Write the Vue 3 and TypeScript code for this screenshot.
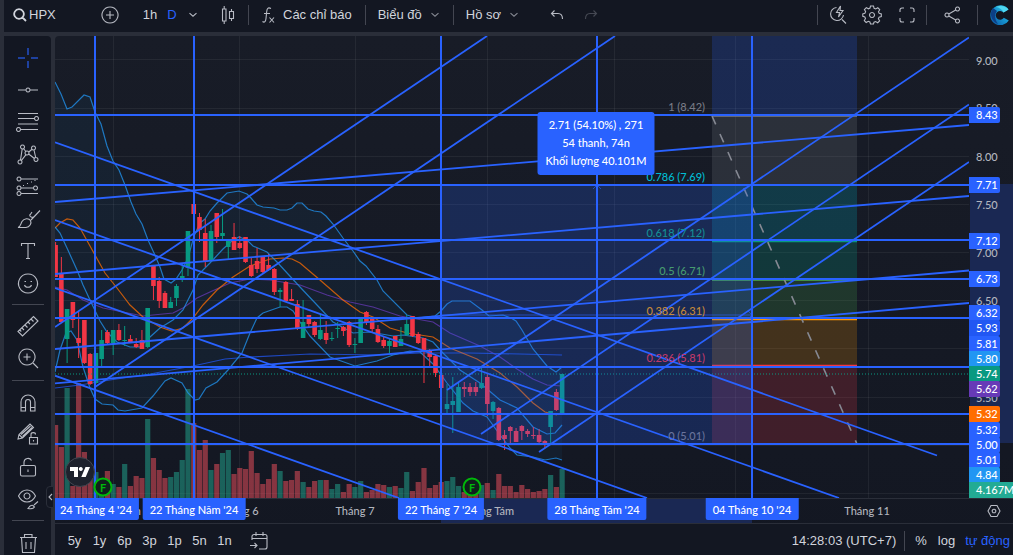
<script setup lang="ts">
type Point = [number, number]
type Candle = { x: number; top: number; bottom: number; high: number; low: number; up: boolean; vol: number }

const view = { x: 55, y: 36, w: 914, h: 462 }
const leftPct = (x: number) => `${((x - view.x) / view.w) * 100}%`
const topPct = (y: number) => `${((y - view.y) / view.h) * 100}%`

// body top, body bottom, wick high, wick low, rising (1) or falling (0), volume top
const rows: number[][] = [
  [245, 277, 242, 277, 0, 425], [274, 322, 257, 323, 0, 447], [309, 339, 309, 363, 1, 388], [302, 320, 302, 328, 0, 486],
  [338, 343, 311, 358, 0, 383], [320, 363, 320, 364, 0, 452], [354, 384, 353, 385, 0, 468], [353, 383, 353, 384, 1, 472],
  [340, 359, 330, 367, 1, 481], [332, 343, 330, 344, 0, 471], [330, 343, 330, 355, 1, 484], [330, 340, 324, 341, 0, 487],
  [340, 341, 326, 346, 1, 464], [339, 342, 335, 342, 0, 486], [344, 347, 338, 348, 0, 476], [340, 349, 330, 349, 0, 478],
  [308, 347, 308, 348, 1, 419], [265, 286, 265, 300, 0, 458], [281, 301, 277, 308, 0, 470], [293, 308, 291, 308, 0, 478],
  [302, 308, 297, 308, 1, 477], [286, 298, 284, 306, 1, 472], [276, 278, 263, 282, 1, 460], [231, 268, 231, 276, 1, 389],
  [204, 214, 186, 232, 0, 423], [217, 230, 213, 242, 0, 450], [233, 262, 219, 267, 0, 440], [231, 261, 225, 262, 1, 470],
  [213, 237, 213, 243, 0, 464], [233, 236, 209, 239, 1, 453], [241, 247, 239, 260, 1, 450], [237, 250, 223, 250, 0, 474],
  [243, 248, 236, 249, 0, 468], [237, 262, 237, 263, 0, 469], [265, 276, 258, 277, 0, 451], [261, 269, 248, 273, 0, 473],
  [257, 272, 256, 273, 0, 484], [265, 270, 254, 271, 0, 479], [269, 292, 268, 295, 0, 464], [290, 292, 288, 307, 1, 471],
  [282, 301, 281, 302, 0, 481], [299, 301, 289, 301, 0, 480], [304, 329, 300, 330, 0, 471], [322, 338, 300, 338, 1, 482],
  [315, 324, 315, 327, 0, 487], [322, 335, 321, 337, 0, 481], [330, 339, 314, 340, 1, 480], [333, 340, 321, 344, 0, 480],
  [338, 339, 332, 341, 1, 489], [328, 329, 322, 338, 1, 484], [327, 331, 326, 336, 0, 492], [322, 345, 321, 347, 0, 484],
  [344, 345, 338, 353, 1, 487], [319, 343, 318, 343, 1, 481], [312, 322, 311, 325, 0, 492], [319, 329, 319, 333, 0, 490],
  [329, 342, 325, 343, 0, 484], [340, 346, 337, 348, 0, 485], [341, 346, 338, 353, 1, 487], [336, 347, 336, 347, 0, 486],
  [339, 346, 327, 346, 1, 488], [324, 335, 315, 336, 1, 472], [316, 336, 316, 337, 0, 491], [334, 343, 332, 344, 0, 482],
  [338, 350, 338, 383, 0, 468], [350, 357, 349, 367, 0, 488], [356, 373, 354, 377, 0, 485], [375, 388, 372, 405, 0, 482],
  [404, 409, 384, 413, 1, 481], [401, 405, 377, 433, 1, 477], [387, 412, 383, 412, 1, 486], [387, 389, 382, 397, 0, 492],
  [387, 392, 383, 396, 0, 493], [387, 392, 382, 396, 0, 493], [383, 388, 368, 389, 1, 485], [377, 404, 373, 416, 0, 483],
  [402, 411, 401, 419, 1, 490], [408, 440, 407, 441, 0, 474], [435, 439, 430, 450, 0, 486], [427, 431, 426, 443, 0, 486],
  [431, 442, 428, 442, 0, 492], [426, 431, 425, 440, 0, 485], [431, 434, 429, 437, 0, 489], [435, 436, 427, 439, 0, 492],
  [435, 442, 429, 443, 0, 491], [441, 445, 440, 448, 0, 489], [411, 427, 411, 444, 1, 475], [392, 410, 389, 411, 0, 487],
  [374, 414, 374, 414, 1, 469],
]
const candles: Candle[] = rows.map(([top, bottom, high, low, up, vol], i) => ({
  x: 55.6 + i * 5.756, top, bottom, high, low, up: up === 1, vol,
}))

const upper: Point[] = [[55, 82], [61, 94], [67, 109], [72, 107], [84, 95], [90, 97], [95, 112], [101, 124], [107, 146], [113, 161], [119, 170], [125, 185], [131, 202], [136, 214], [142, 224], [148, 240], [154, 253], [160, 267], [164, 279], [171, 283], [176, 279], [182, 270], [188, 258], [194, 236], [200, 223], [205, 219], [210, 211], [217, 203], [227, 193], [239, 191], [247, 194], [251, 198], [257, 205], [263, 207], [274, 208], [280, 210], [287, 210], [292, 208], [297, 203], [302, 203], [308, 209], [314, 211], [321, 212], [326, 216], [333, 224], [343, 238], [353, 251], [360, 261], [366, 266], [377, 280], [383, 291], [407, 315], [417, 318], [435, 316], [441, 311], [447, 304], [452, 301], [470, 301], [482, 310], [489, 316], [503, 315], [511, 318], [516, 321], [522, 330], [533, 349], [547, 366], [556, 372], [562, 367]]
const middle: Point[] = [[55, 227], [60, 233], [67, 248], [77, 270], [83, 285], [90, 300], [100, 321], [107, 332], [117, 342], [130, 347], [140, 347], [150, 337], [160, 328], [173, 320], [183, 310], [193, 290], [198, 275], [210, 263], [223, 249], [233, 240], [239, 237], [247, 240], [253, 246], [267, 252], [277, 262], [288, 274], [300, 287], [317, 305], [333, 322], [353, 333], [370, 332], [393, 336], [403, 335], [423, 338], [433, 342], [443, 353], [460, 370], [480, 383], [500, 400], [517, 408], [533, 427], [547, 434], [555, 433], [562, 425]]
const lower: Point[] = [[55, 372], [60, 350], [66, 333], [71, 331], [77, 340], [83, 367], [90, 388], [95, 399], [102, 404], [113, 405], [118, 410], [125, 411], [142, 408], [153, 396], [165, 381], [171, 378], [182, 383], [188, 393], [195, 400], [199, 399], [206, 388], [217, 382], [228, 370], [242, 353], [250, 333], [257, 318], [263, 313], [280, 307], [287, 307], [293, 311], [300, 322], [310, 336], [330, 357], [355, 366], [377, 361], [393, 355], [410, 351], [420, 352], [433, 364], [447, 383], [463, 403], [473, 411], [487, 417], [500, 435], [510, 448], [517, 455], [533, 457], [545, 460], [556, 458], [562, 460]]
const orange: Point[] = [[55, 228], [60, 223], [67, 219], [73, 220], [80, 228], [90, 246], [105, 273], [117, 288], [130, 305], [143, 317], [160, 327], [172, 331], [183, 328], [193, 318], [203, 305], [217, 290], [233, 277], [250, 266], [270, 259], [283, 258], [292, 259], [300, 263], [320, 280], [343, 300], [360, 312], [373, 317], [390, 328], [407, 333], [433, 337], [450, 348], [477, 359], [500, 373], [517, 387], [533, 403], [545, 412], [557, 415]]
const purple: Point[] = [[55, 287], [67, 290], [83, 300], [103, 308], [123, 312], [143, 316], [173, 313], [183, 308], [197, 298], [210, 292], [230, 283], [250, 279], [270, 280], [300, 285], [327, 295], [350, 302], [373, 307], [400, 316], [433, 322], [450, 333], [480, 346], [500, 357], [517, 369], [533, 379], [547, 385], [562, 386]]
const slow: Point[] = [[55, 388], [80, 385], [110, 380], [150, 374], [193, 366], [225, 359], [250, 357], [310, 354], [380, 355], [420, 353], [470, 353], [520, 354], [562, 355]]
const pts = (p: Point[]) => p.map((q) => q.join(',')).join(' ')
const bandFill = pts([...upper, ...[...lower].reverse()])

const gridX = [113.5, 239.5, 355.5, 487.5, 614.5, 735.5, 868.5]
const gridY = [59.5, 108.5, 156.5, 204.5, 252.5, 300.5, 348.5, 397.5, 445.5, 493.5]
const levels = [115, 185, 240, 279, 318, 367, 414, 444]
const verticals = [95, 194, 441, 597, 752]
const trends: number[][] = [
  [55, 327, 487, 36], [95, 387, 615, 36], [447, 390, 969, 37.5], [481, 434, 969, 104.5], [539, 452, 969, 162],
  [55, 202, 969, 125], [55, 274, 969, 196], [55, 349, 969, 270.5], [55, 383.3, 969, 303],
  [55, 142.3, 937, 455.5], [55, 220, 839, 498], [55, 288, 647, 498], [55, 375.7, 399, 498],
]
const fibZones = [
  { y: 36, h: 80, fill: '#2962ff', o: 0.2 },
  { y: 116, h: 69, fill: '#787b86', o: 0.22 },
  { y: 185, h: 56, fill: '#00bcd4', o: 0.2 },
  { y: 241, h: 39, fill: '#089981', o: 0.24 },
  { y: 280, h: 39, fill: '#4caf50', o: 0.2 },
  { y: 319, h: 47, fill: '#ff9800', o: 0.2 },
  { y: 366, h: 78, fill: '#f23645', o: 0.2 },
]
const fibLines = [
  { y: 116, c: '#787b86' }, { y: 241.5, c: '#089981' }, { y: 280, c: '#4caf50' }, { y: 319.5, c: '#ff9800' }, { y: 365.5, c: '#f23645' },
]
const fibLabels = [
  { y: 106, t: '1 (8.42)', c: '#787b86' },
  { y: 176, t: '0.786 (7.69)', c: '#00bcd4' },
  { y: 232, t: '0.618 (7.12)', c: '#138f94' },
  { y: 270, t: '0.5 (6.71)', c: '#469b70' },
  { y: 310, t: '0.382 (6.31)', c: '#c58a3a' },
  { y: 357, t: '0.236 (5.81)', c: '#c0396b' },
  { y: 435, t: '0 (5.01)', c: '#69739c' },
]
const priceTicks = [
  { y: 60, t: '9.00' }, { y: 107, t: '8.50' }, { y: 156, t: '8.00' }, { y: 204, t: '7.50' },
  { y: 252, t: '7.00' }, { y: 300, t: '6.50' }, { y: 397, t: '5.50' },
]
const priceTags = [
  { y: 115, t: '8.43', c: '#2962ff' }, { y: 185, t: '7.71', c: '#2962ff' }, { y: 241, t: '7.12', c: '#2962ff' },
  { y: 279, t: '6.73', c: '#2962ff' }, { y: 313, t: '6.32', c: '#2962ff' }, { y: 328, t: '5.93', c: '#2157f3' },
  { y: 344, t: '5.81', c: '#2962ff' }, { y: 359, t: '5.80', c: '#2196f3' }, { y: 374, t: '5.74', c: '#089981' },
  { y: 389, t: '5.62', c: '#673ab7' }, { y: 414, t: '5.32', c: '#ff6d00' }, { y: 430, t: '5.32', c: '#2962ff' },
  { y: 445, t: '5.00', c: '#2962ff' }, { y: 460, t: '5.01', c: '#2962ff' }, { y: 475, t: '4.84', c: '#2196f3' },
  { y: 490, t: '4.167M', c: '#22ab94', wide: true },
]
const timeTicks = [
  { x: 113, t: 'Tháng Năm' }, { x: 239, t: 'Tháng 6' }, { x: 355, t: 'Tháng 7' }, { x: 488, t: 'Tháng Tám' }, { x: 867, t: 'Tháng 11' },
]
const timeTags = [
  { x: 96, t: "24 Tháng 4 '24" }, { x: 194, t: "22 Tháng Năm '24" }, { x: 441, t: "22 Tháng 7 '24" },
  { x: 597, t: "28 Tháng Tám '24" }, { x: 752, t: "04 Tháng 10 '24" },
]
const ranges = ['5y', '1y', '6p', '3p', '1p', '5n', '1n']

const toolGroups: { name: string; d: string; cls?: string }[][] = [
  [
    { name: 'Con trỏ', cls: 'cursor', d: 'M14 4v7M14 17v7M4 14h7M17 14h7' },
    { name: 'Đường ngang', d: 'M4 14h8M16 14h8M14 12a2 2 0 1 0 .01 0' },
    { name: 'Fibonacci', d: 'M4 5.500h20M4 10.500h17M6.500 21.500h17.500M4 16h20M22.500 8.500a2 2 0 1 0 .01 0M4.500 19.500a2 2 0 1 0 .01 0' },
    { name: 'Mô hình', d: 'M8.500 5a2 2 0 1 0 .01 0M19.500 6a2 2 0 1 0 .01 0M6 20a2 2 0 1 0 .01 0M22 17.500a2 2 0 1 0 .01 0M13 11a2 2 0 1 0 .01 0M8.200 9L6.500 20M9.500 8.500l2.300 3M14.800 12l3.500-3M20 10l1.700 7.500M7.300 20.600l4.700-6M14.700 14l5.700 4.500' },
    { name: 'Dự báo', d: 'M5 5a2 2 0 1 0 .01 0M7 7h17M5 14a2 2 0 1 0 .01 0M7 16h12M21.500 14a2 2 0 1 0 .01 0M5 19.500a2 2 0 1 0 .01 0M7 21.500h17M9 13.500h1M13 11.500h1M17 10h1M20.500 8.500h1' },
    { name: 'Cọ vẽ', d: 'M4 23.500c3-1 2.500-3.500 4-6 2-3.500 7-3.500 8.500-1 1.500 3-1 6.500-4.500 7zM17 16l9-9.500M15.500 10.500c.5 3 2.500 3 4 2.500M16 11l2-3' },
    { name: 'Văn bản', d: 'M7.500 10V7.500h13V10M14 7.500v15M12 22.500h4' },
    { name: 'Biểu tượng', d: 'M14 6a9.500 9.500 0 1 0 .01 0M10.500 17c1 3 6 3 7 0M10.500 13.500h1.500M16.500 13.500h1.500' },
  ],
  [
    { name: 'Thước đo', d: 'M4 19.500L19.500 4.500l4.500 4.500L8.500 24zM8 16l2 2M11 13l2.500 2.500M14 10l2 2M17 7l2.500 2.500M5.800 18l1.500 1.500' },
    { name: 'Phóng to', d: 'M13 5a8 8 0 1 0 .01 0M19 19l5 5M9.500 13h7M13 9.500v7' },
  ],
  [
    { name: 'Nam châm', d: 'M7 23V14a7 7 0 0 1 14 0v9h-4.500v-9a2.500 2.500 0 0 0-5 0v9zM7 19.500h4.500M16.500 19.500H21' },
    { name: 'Khóa chế độ vẽ', d: 'M4 19l1-4.500L16 4l3.500 3.500L8.500 18zM7 14.500L16.500 6M8.500 16.500L18 7.500M5 14.500l3.500 3.500M15.500 17.500h8v6.500h-8zM17 17.500v-3c0-2.500 4.500-2.500 4.500 0M19.500 20v1.500' },
    { name: 'Khóa công cụ', d: 'M8 13.500h12a1.500 1.500 0 0 1 1.500 1.500v7.500a1.500 1.500 0 0 1-1.500 1.500H8a1.500 1.500 0 0 1-1.500-1.500V15A1.500 1.500 0 0 1 8 13.500zM10 13.500V10a4 4 0 0 1 7.500-1.500M14 17.500v2.500' },
    { name: 'Ẩn hình vẽ', d: 'M4.500 12c4-8 13-8 17 0-4 8-13 8-17 0zM13 9a3 3 0 1 0 .01 0M14 24.500c2-3 3-4 5-3l1.500 1.500c-1 2-3.500 2-6.500 1.500zM20 21l4-3.500' },
  ],
  [
    { name: 'Xóa', d: 'M6 9.500h17M10.500 9.500V6.500h7.500v3M7.500 9.500l1 15h12l1-15M12 14v7M17 14v7' },
  ],
]
</script>

<template>
  <div class="app">
    <header class="topbar">
      <button class="symbol">
        <svg width="14" height="14" viewBox="0 0 14 14"><path d="M6 1.200a4.800 4.800 0 1 0 .01 0M9.500 9.500L13 13" class="thick" /></svg>
        <span>HPX</span>
      </button>
      <button class="plus" aria-label="So sánh">
        <svg width="20" height="20" viewBox="0 0 20 20"><path d="M10 2a8 8 0 1 0 .01 0M10 6v8M6 10h8" /></svg>
      </button>
      <button class="frame first">1h</button>
      <button class="frame on">D</button>
      <button class="frame last-frame" aria-label="Khung thời gian">
        <svg width="10" height="6" viewBox="0 0 10 6"><path d="M1.500 1.200l3.500 3 3.500-3" /></svg>
      </button>
      <button class="kind" aria-label="Kiểu nến">
        <svg width="16" height="20" viewBox="0 0 16 20"><path d="M2.500 4h3.500v12h-3.500zM4.200 1v3M4.200 16v3M9.500 6.500h4v7h-4zM11.500 4v2.500M11.500 13.500V16" /></svg>
      </button>
      <i class="sep"></i>
      <button class="label">
        <svg class="fx" width="16" height="18" viewBox="0 0 16 18"><path d="M10 2.500c-3-1.500-4 0-4.300 3L5 12.500C4.700 15.500 3.500 17 1.500 15.500M3 7.500h6M8.500 11.500l4.500 5M13 11.500l-4.500 5" /></svg>
        <span>Các chỉ báo</span>
      </button>
      <i class="sep"></i>
      <button class="label">
        <span>Biểu đồ</span>
        <svg class="caret" width="10" height="6" viewBox="0 0 10 6"><path d="M1.500 1.200l3.500 3 3.500-3" /></svg>
      </button>
      <i class="sep"></i>
      <button class="label">
        <span>Hồ sơ</span>
        <svg class="caret" width="10" height="6" viewBox="0 0 10 6"><path d="M1.500 1.200l3.500 3 3.500-3" /></svg>
      </button>
      <button class="undo" aria-label="Hoàn tác">
        <svg width="14" height="12" viewBox="0 0 14 12"><path d="M4.500 1.500L1.500 4.500l3 3M1.500 4.500H8c3 0 4.500 2 4.500 5.500" /></svg>
      </button>
      <button class="undo off" aria-label="Làm lại" disabled>
        <svg width="14" height="12" viewBox="0 0 14 12"><path d="M9.500 1.500l3 3-3 3M12.500 4.500H6c-3 0-4.500 2-4.500 5.500" /></svg>
      </button>
      <div class="spring"></div>
      <i class="sep"></i>
      <button class="act" aria-label="Tìm nhanh">
        <svg width="20" height="20" viewBox="0 0 20 20"><path d="M8.500 2.500a6.500 6.500 0 1 0 7 7.500M14 14.500l4 4M12.500 1L8.500 7.500h3L10.500 12 15 5.500h-3z" /></svg>
      </button>
      <button class="act narrow" aria-label="Cài đặt">
        <svg width="20" height="20" viewBox="0 0 20 20"><path d="M8.500 1h3l.6 2.300 1.600.7 2.100-1.200 1.900 1.900L16.500 6.800l.7 1.600 2.100.6v2.500l-2.200.6-.7 1.600 1.200 2.100-1.900 1.900-2.100-1.200-1.600.7L11.500 19h-3l-.6-2-1.600-.7-2.100 1.200-1.900-1.900 1.200-2.100-.7-1.600L.8 11.300V8.800l2.100-.6.7-1.600-1.200-2.100 1.900-1.900 2.100 1.200 1.600-.7zM10 7.500a2.500 2.500 0 1 0 .01 0" /></svg>
      </button>
      <button class="act" aria-label="Toàn màn hình">
        <svg width="16" height="16" viewBox="0 0 16 16"><path d="M1 5V3a2 2 0 0 1 2-2h2M11 1h2a2 2 0 0 1 2 2v2M15 11v2a2 2 0 0 1-2 2h-2M5 15H3a2 2 0 0 1-2-2v-2" /></svg>
      </button>
      <i class="sep"></i>
      <button class="act share" aria-label="Chia sẻ">
        <svg width="16" height="18" viewBox="0 0 16 18"><path d="M3 7a2 2 0 1 0 .01 0M13.500 1a2 2 0 1 0 .01 0M13.500 13a2 2 0 1 0 .01 0M4.800 8L11.700 4M4.800 10l6.900 4" /></svg>
      </button>
      <i class="sep"></i>
      <a href="#" class="brand" aria-label="Trang chủ">
        <svg width="20" height="20" viewBox="0 0 20 20">
          <defs>
            <linearGradient id="brandBlue" x1="0" y1="1" x2="1" y2="0">
              <stop offset="0" stop-color="#0b4fa0" /><stop offset="0.5" stop-color="#1593cf" /><stop offset="1" stop-color="#37d0ee" />
            </linearGradient>
          </defs>
          <path class="solid brand-ring" d="M18.500 4.500A10 10 0 1 0 18.800 15.500L13.800 12.700A4.400 4.400 0 1 1 13.500 7.500z" />
          <path class="solid brand-dark" d="M3 3c-4 5-2 13 5 16-3-4-4-9-1-13z" />
          <path class="solid brand-light" d="M6 2c4-2 10-1 12.500 2.500L13.500 7.500C12 4 9 2.500 6 2z" />
        </svg>
      </a>
    </header>

    <div class="body">
      <aside class="tools">
        <div v-for="(group, g) in toolGroups" :key="g" class="group">
          <button v-for="tool in group" :key="tool.name" :class="['tool', tool.cls]" :aria-label="tool.name">
            <svg width="28" height="28" viewBox="0 0 28 28"><path :d="tool.d" /></svg>
          </button>
        </div>
        <button class="collapse" aria-label="Thu gọn">
          <svg width="5" height="8" viewBox="0 0 5 8"><path d="M4 1L1 4l3 3" /></svg>
        </button>
      </aside>

      <main class="panel">
        <section class="plot">
          <svg class="canvas" :viewBox="`${view.x} ${view.y} ${view.w} ${view.h}`" preserveAspectRatio="none">
            <g class="grid">
              <line v-for="x in gridX" :key="'x' + x" :x1="x" :x2="x" y1="36" y2="498" />
              <line v-for="y in gridY" :key="'y' + y" x1="55" x2="969" :y1="y" :y2="y" />
            </g>
            <polygon :points="bandFill" class="band" />
            <g>
              <rect v-for="(c, i) in candles" :key="i" :x="c.x - 2.6" :y="c.vol" width="5.2" :height="498 - c.vol" :class="c.up ? 'vol-up' : 'vol-down'" />
            </g>
            <g>
              <rect v-for="z in fibZones" :key="z.y" x="712" width="145" :y="z.y" :height="z.h" :fill="z.fill" :fill-opacity="z.o" />
              <line v-for="l in fibLines" :key="l.y" x1="712" x2="857" :y1="l.y" :y2="l.y" :stroke="l.c" stroke-width="1.5" />
              <line x1="712" y1="116" x2="857" y2="444" class="dash" />
            </g>
            <polyline :points="pts(purple)" class="ma purple" />
            <polyline :points="pts(slow)" class="ma slow" />
            <polyline :points="pts(orange)" class="ma orange" />
            <polyline :points="pts(upper)" class="ma blue" />
            <polyline :points="pts(middle)" class="ma blue" />
            <polyline :points="pts(lower)" class="ma blue" />
            <g v-for="(c, i) in candles" :key="'c' + i" :class="c.up ? 'up' : 'down'">
              <rect :x="c.x - 0.5" :y="c.high" width="1" :height="c.low - c.high" />
              <rect :x="c.x - 2.3" :y="c.top" width="4.6" :height="c.bottom - c.top" />
            </g>
            <line x1="55" x2="969" y1="374" y2="374" class="last" />
            <rect x="441" y="185" width="311" height="259" class="range" />
            <path d="M441 315h311M748 311l4 4-4 4M593 189l4-4 4 4" class="range-line" />
            <g class="draw">
              <line v-for="y in levels" :key="'l' + y" x1="55" x2="969" :y1="y" :y2="y" />
              <line v-for="x in verticals" :key="'v' + x" :x1="x" :x2="x" y1="36" y2="498" />
              <line v-for="(t, i) in trends" :key="'t' + i" :x1="t[0]" :y1="t[1]" :x2="t[2]" :y2="t[3]" class="slant" />
            </g>
          </svg>
          <span v-for="f in fibLabels" :key="f.y" class="fib" :style="{ left: leftPct(705), top: topPct(f.y), color: f.c }">{{ f.t }}</span>
          <div class="tip" :style="{ left: leftPct(596), top: topPct(112) }">
            <span>2.71 (54.10%) , 271</span><span>54 thanh, 74n</span><span>Khối lượng 40.101M</span>
          </div>
          <a href="#" class="tv" aria-label="TradingView" :style="{ left: leftPct(80), top: topPct(472) }">
            <svg width="20" height="12" viewBox="0 0 20 12"><path class="solid tv-mark" d="M0 1h8v10H4V5H0zM10.800 1a2 2 0 1 1-.01 0M15.500 1H20l-4.300 10h-4.400z" /></svg>
          </a>
          <span v-for="x in [103, 472]" :key="x" class="event" :style="{ left: leftPct(x), top: topPct(487) }">F</span>
        </section>

        <aside class="prices">
          <div class="hot" :style="{ top: topPct(184), height: `${(259 / view.h) * 100}%` }"></div>
          <span v-for="p in priceTicks" :key="p.y" class="tick" :style="{ top: topPct(p.y) }">{{ p.t }}</span>
          <span v-for="p in priceTags" :key="p.y" :class="['tag', { wide: p.wide }]" :style="{ top: topPct(p.y), background: p.c }">{{ p.t }}</span>
        </aside>

        <section class="times">
          <div class="hot" :style="{ left: leftPct(441), width: `${(311 / view.w) * 100}%` }"></div>
          <span v-for="t in timeTicks" :key="t.x" class="tick" :style="{ left: leftPct(t.x) }">{{ t.t }}</span>
          <span v-for="t in timeTags" :key="t.x" class="tag" :style="{ left: leftPct(t.x) }">{{ t.t }}</span>
        </section>
        <button class="axis-set" aria-label="Cài đặt trục">
          <svg width="14" height="14" viewBox="0 0 14 14"><path d="M4 1.500h6L13 7l-3 5.500H4L1 7zM7 5.200a1.800 1.800 0 1 0 .01 0" /></svg>
        </button>

        <footer class="bottom">
          <button v-for="r in ranges" :key="r" class="span">{{ r }}</button>
          <button class="goto" aria-label="Đi tới ngày">
            <svg width="20" height="20" viewBox="0 0 20 20"><path d="M3 9V5.500A2 2 0 0 1 5 3.500h11a2 2 0 0 1 2 2V16a2 2 0 0 1-2 2h-6M3 7.500h15M7 1v4M14 1v4M1 14.500h7M5.500 12L8 14.500 5.500 17" /></svg>
          </button>
          <div class="spring"></div>
          <button class="clock">14:28:03 (UTC+7)</button>
          <i class="sep"></i>
          <button class="scale pct">%</button>
          <button class="scale log">log</button>
          <button class="scale on">tự động</button>
        </footer>
      </main>
    </div>
  </div>
</template>

<style>
body {
  margin: 0;
  background: #22262f;
}
</style>

<style scoped>
.app {
  display: flex;
  flex-direction: column;
  gap: 4px;
  height: 100vh;
  padding-left: 4px;
  box-sizing: border-box;
  overflow: hidden;
  background: #2a2e39;
  color: #d1d4dc;
  font: 13px/16px "Liberation Sans", Arial, sans-serif;
}
button {
  display: flex;
  align-items: center;
  justify-content: center;
  flex: none;
  margin: 0;
  padding: 0;
  border: 0;
  background: none;
  color: inherit;
  font: inherit;
  white-space: nowrap;
}
svg { display: block; flex: none; }
path { fill: none; stroke: #b8bbc4; stroke-width: 1.1; }
path.thick { stroke-width: 1.8; stroke: #d1d4dc; }
path.solid { stroke: none; }
.tv-mark { fill: #fff; }
.brand-ring { fill: url(#brandBlue); }
.brand-dark { fill: #0d3f86; }
.brand-light { fill: #4fd8f2; }
.spring { flex: 1; }
.sep { flex: none; width: 1px; height: 20px; background: #434651; }

.topbar {
  display: flex;
  align-items: center;
  flex: none;
  height: 32px;
  padding-bottom: 2px;
  box-sizing: border-box;
  background: #131722;
}
.topbar button { height: 30px; }
.topbar .symbol { width: 86px; padding-left: 9px; box-sizing: border-box; justify-content: flex-start; gap: 2px; }
.topbar .plus { width: 40px; }
.topbar .frame { width: 22px; }
.topbar .first { margin-left: 9px; }
.topbar .last-frame { width: 20px; }
.topbar .on { color: #2962ff; }
.topbar .kind { width: 45px; padding-left: 4px; box-sizing: border-box; }
.topbar .label { padding: 0 13px 0 12px; }
.fx { margin-right: 6px; }
.caret { margin-left: 8px; }
.caret path { stroke: #868993; }
.topbar .undo { width: 34px; }
.topbar .undo:not(.off) { margin-left: 8px; }
.topbar .off { opacity: 0.3; }
.topbar .act { width: 39px; }
.topbar .narrow { width: 30px; }
.topbar .share { width: 50px; }
.brand { margin: 0 3px 0 12px; }

.body {
  display: flex;
  flex: 1;
  gap: 4px;
  min-height: 0;
}
.tools {
  position: relative;
  flex: none;
  width: 47px;
  padding-top: 6px;
  box-sizing: border-box;
  border-radius: 0 4px 0 0;
  background: #131722;
}
.group { display: flex; flex-direction: column; align-items: center; }
.group + .group::before {
  content: "";
  width: 32px;
  height: 1px;
  margin: 6px 0 5px;
  background: #434651;
}
.tool { width: 32px; height: 32px; }
.cursor path { stroke: #1e419f; stroke-width: 2; }
.collapse {
  position: absolute;
  right: -3px;
  top: 450px;
  width: 8px;
  height: 22px;
  border: 1px solid #2a2e39;
  border-radius: 4px 0 0 4px;
  background: #131722;
}

.panel {
  display: grid;
  grid-template: minmax(0, 1fr) 25px 32px / minmax(0, 1fr) 44px;
  flex: 1;
  min-width: 0;
  border-radius: 4px 0 0 0;
  background: linear-gradient(#181c27, #131722);
  overflow: hidden;
  font: 500 11px/15px Lato, "Noto Sans", sans-serif;
}
.plot, .prices, .times { position: relative; min-width: 0; min-height: 0; }
.plot { overflow: hidden; }
.canvas { position: absolute; inset: 0; width: 100%; height: 100%; }
.grid line { stroke: #fff; stroke-opacity: 0.06; }
.band { fill: #2196f3; fill-opacity: 0.06; }
.vol-up { fill: #22ab94; fill-opacity: 0.5; }
.vol-down { fill: #f7525f; fill-opacity: 0.5; }
.up { fill: #089981; }
.down { fill: #f23645; }
.ma { fill: none; stroke-width: 1.2; }
.blue { stroke: #2196f3; stroke-opacity: 0.75; }
.purple { stroke: #673ab7; stroke-opacity: 0.75; }
.orange { stroke: #ff6d00; stroke-opacity: 0.75; }
.slow { stroke: #2157f3; stroke-opacity: 0.75; }
.last { stroke: #089981; stroke-dasharray: 1 2; }
.dash { stroke: #868993; stroke-width: 1.6; stroke-dasharray: 9.2 10.5; }
.range { fill: #2962ff; fill-opacity: 0.22; }
path.range-line { stroke: #2962ff; stroke-opacity: 0.6; stroke-width: 1; }
.draw line { stroke: #2962ff; stroke-width: 2; }
.draw .slant { stroke-width: 1.8; }
.fib { position: absolute; transform: translate(-100%, -50%); white-space: nowrap; }
.tip {
  position: absolute;
  display: flex;
  flex-direction: column;
  align-items: center;
  padding: 4px 8px 5px;
  transform: translateX(-50%);
  border-radius: 3px;
  background: #2962ff;
  color: #fff;
  line-height: 18px;
  white-space: nowrap;
}
.tv, .event {
  position: absolute;
  display: flex;
  align-items: center;
  justify-content: center;
  box-sizing: border-box;
  transform: translate(-50%, -50%);
  border-radius: 50%;
}
.tv { width: 30px; height: 30px; border: 1px solid #434651; background: #1e222d; }
.event { width: 19px; height: 19px; border: 2px solid #00b80a; background: #10201c; color: #00b80a; font-weight: 700; }

.prices .tick, .prices .tag {
  position: absolute;
  left: 0;
  width: 31px;
  padding-left: 7px;
  box-sizing: border-box;
  transform: translateY(-50%);
}
.tick { color: #b2b5be; }
.tag { color: #fff; white-space: nowrap; }
.prices .tag { height: 16px; border-radius: 0 2px 2px 0; line-height: 16px; }
.prices .wide { width: 44px; border-radius: 0; }
.hot { position: absolute; background: #1a2853; }
.prices .hot { left: 1px; right: 0; }
.times, .axis-set { border-top: 1px solid #2a2e39; box-sizing: border-box; }
.times .hot { top: 0; bottom: 0; }
.times .tick, .times .tag { position: absolute; transform: translateX(-50%); white-space: nowrap; }
.times .tick { top: 4px; }
.times .tag {
  top: -1px;
  padding: 4px 7px 3px;
  border-radius: 0 0 2px 2px;
  background: #2962ff;
}
.axis-set { padding-left: 6px; }

.bottom {
  display: flex;
  align-items: center;
  grid-column: 1 / -1;
  padding: 3px 3px 0 7px;
  border-top: 1px solid #2a2e39;
  background: #131722;
  font: 13px/16px "Liberation Sans", Arial, sans-serif;
}
.bottom .span { width: 25px; }
.goto { margin-left: 12px; }
.clock { margin-right: 8px; }
.scale { margin-left: 10px; }
.bottom .pct { margin-right: 1px; }
.bottom .on { color: #2962ff; }
</style>
